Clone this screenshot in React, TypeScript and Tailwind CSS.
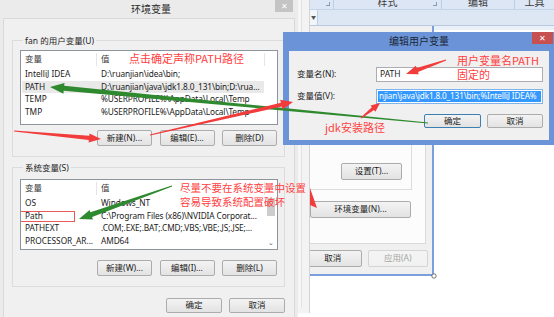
import React from "react";
import clsx from "clsx";

type Pt = [number, number];

// tapered annotation arrow: thin at the tail, wide head at the tip
function arrowPoints(tail: Pt, tip: Pt, w0: number, w1: number, hw: number, hl: number) {
  const dx = tip[0] - tail[0];
  const dy = tip[1] - tail[1];
  const len = Math.hypot(dx, dy);
  const ux = dx / len;
  const uy = dy / len;
  const nx = -uy;
  const ny = ux;
  const base: Pt = [tip[0] - ux * hl, tip[1] - uy * hl];
  const p = (c: Pt, off: number) => `${(c[0] + nx * off).toFixed(1)},${(c[1] + ny * off).toFixed(1)}`;
  return [
    p(tail, w0 / 2),
    p(base, w1 / 2),
    p(base, hw / 2),
    `${tip[0]},${tip[1]}`,
    p(base, -hw / 2),
    p(base, -w1 / 2),
    p(tail, -w0 / 2),
  ].join(" ");
}

const ui = "font-[Noto_Sans,Noto_Sans_CJK_SC,sans-serif]";
const cjk = "font-[Noto_Sans_CJK_SC,Noto_Sans,sans-serif]";

function Btn({
  children,
  className,
  primary = false,
  disabled = false,
}: {
  children: React.ReactNode;
  className?: string;
  primary?: boolean;
  disabled?: boolean;
}) {
  return (
    <div
      className={clsx(
        "flex items-center justify-center rounded-[2px] border bg-linear-to-b text-[8.5px] leading-none whitespace-nowrap",
        disabled
          ? "border-[#d4d4d4] from-[#f4f4f4] to-[#f1f1f1] text-[#a6a6a6]"
          : primary
            ? "border-[#3c7fb1] from-[#f3f3f3] to-[#e2e2e2] text-[#1a1a1a]"
            : "border-[#acacac] from-[#f3f3f3] to-[#e3e3e3] text-[#1a1a1a]",
        className,
      )}
    >
      {children}
    </div>
  );
}

type Row = [string, string];

function VarList({
  rows,
  selected,
  heightClass,
  scroll = false,
  boxed,
}: {
  rows: Row[];
  selected?: number;
  heightClass: string;
  scroll?: boolean;
  boxed?: number;
}) {
  return (
    <div className={clsx("flex w-full overflow-hidden border border-[#8e949c] bg-white", heightClass)}>
      <div className="flex w-[244px] flex-col">
        <div className="flex h-[17px] shrink-0 items-center text-[8.5px] text-[#3a3a3a]">
          <div className="w-[76px] border-r border-[#e5e5e5] pl-[4px]">变量</div>
          <div className="w-[168px] border-r border-[#e5e5e5] pl-[4px]">值</div>
        </div>
        {rows.map(([k, v], i) => (
          <div
            key={k}
            className={clsx(
              "relative ml-[1px] flex h-[12.5px] w-[242px] shrink-0 items-center text-[8.3px] text-[#1a1a1a]",
              i === selected && "bg-[#e9e9e9]",
            )}
          >
            <div className="w-[75px] overflow-hidden pl-[3px] whitespace-nowrap">{k}</div>
            <div className="w-[167px] overflow-hidden pl-[4px] whitespace-nowrap tracking-[-0.1px]">{v}</div>
            {i === boxed && (
              <div className="absolute top-[1px] left-[-2px] h-[11px] w-[55px] border border-[#e65a5a]" />
            )}
          </div>
        ))}
      </div>
      <div className="flex flex-1 flex-col">
        {scroll && (
          <>
            <div className="h-[18px]" />
            <div className="mx-[2px] h-[18px] bg-[#cdcdcd]" />
            <div className="flex-1" />
            <div className="flex h-[9px] items-center justify-center pb-[2px] text-[7px] text-[#606060]">⌄</div>
          </>
        )}
      </div>
    </div>
  );
}

function Legend({ children }: { children: React.ReactNode }) {
  return <legend className="ml-[3px] px-[2px] text-[8.5px] leading-[11px] text-[#1f1f1f]">{children}</legend>;
}

function EnvDialog() {
  return (
    <div className="absolute top-0 left-0 flex h-[317px] w-[298px] flex-col bg-[#ebebeb]">
      <div className="relative flex h-[18px] shrink-0 items-center justify-center pl-[4px] text-[10px] text-[#2b2b2b]">
        环境变量
        <div className="absolute top-0 right-[5px] flex h-[12px] w-[18px] items-center justify-center bg-[#c4c4c4] text-[8px] text-white">
          ✕
        </div>
      </div>
      <div className="mx-[3px] flex flex-1 flex-col border-x border-t border-[#d9d9d9] bg-[#f0f0f0] pl-[8px]">
        <fieldset className="mt-[16px] w-[273px] border border-[#dcdcdc] pr-[6px] pb-[10px] pl-[7px]">
          <Legend>fan 的用户变量(U)</Legend>
          <div className="mt-[4px]">
            <VarList
              heightClass="h-[75px]"
              selected={1}
              rows={[
                ["IntelliJ IDEA", "D:\\ruanjian\\idea\\bin;"],
                ["PATH", "D:\\ruanjian\\java\\jdk1.8.0_131\\bin;D:\\rua..."],
                ["TEMP", "%USERPROFILE%\\AppData\\Local\\Temp"],
                ["TMP", "%USERPROFILE%\\AppData\\Local\\Temp"],
              ]}
            />
          </div>
          <div className="mt-[5px] mr-[1px] flex justify-end gap-[7.5px]">
            <Btn className="h-[16px] w-[55px]">新建(N)...</Btn>
            <Btn className="h-[16px] w-[55px]">编辑(E)...</Btn>
            <Btn className="h-[16px] w-[55px]">删除(D)</Btn>
          </div>
        </fieldset>
        <fieldset className="mt-[5px] w-[273px] border border-[#dcdcdc] pr-[6px] pb-[10px] pl-[7px]">
          <Legend>系统变量(S)</Legend>
          <div className="mt-[6px]">
            <VarList
              heightClass="h-[71px]"
              scroll
              boxed={1}
              rows={[
                ["OS", "Windows_NT"],
                ["Path", "C:\\Program Files (x86)\\NVIDIA Corporat..."],
                ["PATHEXT", ".COM;.EXE;.BAT;.CMD;.VBS;.VBE;.JS;.JSE;..."],
                ["PROCESSOR_AR...", "AMD64"],
                ["PROCESSOR_ID...", "Intel64 Family 6 Model 60 Stepping 3, G..."],
              ]}
            />
          </div>
          <div className="mt-[10px] mr-[1px] flex justify-end gap-[7.5px]">
            <Btn className="h-[16px] w-[55px]">新建(W)...</Btn>
            <Btn className="h-[16px] w-[55px]">编辑(I)...</Btn>
            <Btn className="h-[16px] w-[55px]">删除(L)</Btn>
          </div>
        </fieldset>
        <div className="mt-[11px] flex justify-end gap-[7px] pr-[9px]">
          <Btn className="h-[15px] w-[56px]">确定</Btn>
          <Btn className="h-[15px] w-[56px]">取消</Btn>
        </div>
      </div>
    </div>
  );
}

function EditDialog() {
  return (
    <div className="absolute top-[32px] left-[283px] flex h-[113px] w-[272px] flex-col bg-[#6a94d7] px-[6px] pb-[5px]">
      <div className="flex h-[19px] shrink-0 items-center justify-center text-[10px] text-[#1c2636]">编辑用户变量</div>
      <div className="absolute top-0 right-[2px] flex h-[12px] w-[21px] items-center justify-center bg-[#c75050] text-[8px] text-white">
        ✕
      </div>
      <div className="flex flex-1 flex-col bg-[#f0f0f0] pr-[6px] pl-[8px] text-[8.5px] text-[#1a1a1a]">
        <div className="mt-[16px] flex items-center">
          <div className="w-[79px]">变量名(N):</div>
          <div className="flex h-[15px] w-[167px] items-center border border-[#abadb3] bg-white pl-[3px]">PATH</div>
        </div>
        <div className="mt-[7px] flex items-center">
          <div className="w-[79px]">变量值(V):</div>
          <div className="flex h-[15px] w-[167px] items-center border border-[#7eb4ea] bg-white p-[1px]">
            <div className="flex h-full w-full items-center overflow-hidden bg-[#3399ff] pl-[1px] text-[8.2px] whitespace-nowrap tracking-[-0.15px] text-white">
              njian\java\jdk1.8.0_131\bin;%IntelliJ IDEA%
            </div>
          </div>
        </div>
        <div className="mt-[10px] flex justify-end gap-[6px]">
          <Btn primary className="h-[14px] w-[57px]">
            确定
          </Btn>
          <Btn className="h-[14px] w-[56px]">取消</Btn>
        </div>
      </div>
    </div>
  );
}

function SysProps() {
  return (
    <div className="absolute top-[26px] left-[300px] flex h-[250px] w-[134px] flex-col border-r-2 border-b-2 border-[#7a9fdc] bg-[#f0f0f0] pr-[4px] pl-[4px]">
      <div className="mt-[14px] flex h-[204px] w-[122px] flex-col border border-[#dadada] bg-[#fcfcfc]">
        <div className="flex h-[149px] w-[107px] items-end justify-end border-r border-b border-[#dcdcdc] pr-[9px] pb-[9px]">
          <Btn className="h-[17px] w-[61px]">设置(T)...</Btn>
        </div>
        <Btn className="mt-[11px] ml-[5px] h-[17px] w-[101px]">环境变量(N)...</Btn>
      </div>
      <div className="mt-[6px] flex justify-end gap-[6px]">
        <Btn className="h-[17px] w-[60px]">取消</Btn>
        <Btn disabled className="h-[17px] w-[63px]">
          应用(A)
        </Btn>
      </div>
    </div>
  );
}

function Ribbon() {
  return (
    <div className="absolute top-0 left-[310px] flex h-[30px] w-[244px] flex-col bg-[#e3ebf6]">
      <div className="flex h-[10px] shrink-0 overflow-hidden border-b border-[#c3d3e8] bg-[#dce6f4] text-[10px] text-[#3b3b3b]">
        <div className="flex w-[24px] items-start justify-end border-r border-[#bccde4] pr-[3px]">
          <div className="mt-[2px] h-[4px] w-[4px] border-r border-b border-[#8a9ab0]" />
        </div>
        <div className="relative flex w-[108px] justify-center border-r border-[#bccde4]">
          <span className="-mt-[5px] leading-[14px]">样式</span>
          <div className="absolute top-[2px] right-[4px] h-[4px] w-[4px] border-r border-b border-[#8a9ab0]" />
        </div>
        <div className="flex w-[73px] justify-center border-r border-[#bccde4]">
          <span className="-mt-[5px] leading-[14px]">编辑</span>
        </div>
        <div className="flex flex-1 justify-center">
          <span className="-mt-[5px] leading-[14px]">工具</span>
        </div>
      </div>
      <div className="flex h-[16px] shrink-0 border-b border-[#b7c8df] bg-[#dde7f4]">
        <div className="flex w-[8px] items-center justify-center border-r border-[#bfcde0] bg-[#f2f6fb] text-[5px] text-[#555]">▼</div>
      </div>
      <div className="flex-1 bg-[#eaf0f8]" />
    </div>
  );
}

function Annotations() {
  const red = "#f23c3c";
  const green = "#2f8a2f";
  return (
    <>
      <svg className="pointer-events-none absolute top-0 left-0" width={554} height={317} viewBox="0 0 554 317">
        <polygon points={arrowPoints([428, 123], [50, 87], 1, 5, 11, 14)} fill={green} />
        <polygon points={arrowPoints([172, 186], [79, 219], 1, 5, 10, 13)} fill={green} />
        <polygon points={arrowPoints([14, 131], [101, 139], 0.8, 4.5, 9, 12)} fill={red} />
        <polygon points={arrowPoints([150, 135], [293, 102], 1, 4, 10, 12)} fill={red} />
        <polygon points={arrowPoints([361, 118], [380, 103], 1, 3.5, 8, 9)} fill={red} />
        <polygon points={arrowPoints([446, 60], [406, 74], 1, 4, 9, 12)} fill={red} />
        <polygon points="310,188 310,205 317,208" fill={red} />
        <circle cx={434} cy={276} r={2.2} fill="white" stroke="#555" strokeWidth={0.8} />
      </svg>
      <div className={clsx(cjk, "pointer-events-none absolute top-[52px] left-[129px] text-[11px] leading-[13px] text-[#ff4040]")}>
        点击确定声称PATH路径
      </div>
      <div className={clsx(cjk, "pointer-events-none absolute top-[53px] left-[457px] text-[11px] leading-[14px] text-[#ff4040]")}>
        用户变量名PATH
        <br />
        固定的
      </div>
      <div className={clsx(cjk, "pointer-events-none absolute top-[121px] left-[325px] text-[11px] leading-[13px] text-[#ff4040]")}>
        jdk安装路径
      </div>
      <div className={clsx(cjk, "pointer-events-none absolute top-[181px] left-[180px] text-[10.5px] leading-[14px] text-[#ff4040]")}>
        尽量不要在系统变量中设置
        <br />
        容易导致系统配置破坏
      </div>
    </>
  );
}

export default function App() {
  return (
    <div className={clsx(ui, "relative h-[317px] w-[554px] overflow-hidden bg-white")}>
      <Ribbon />
      <SysProps />
      <div className="absolute top-0 left-0 h-[313px] w-[310px] border-r border-[#d3d3d3] bg-[#f3f3f3]">
        <div className="h-[308px] w-[302px] border-r border-[#e1e1e1] bg-[#f6f6f6]" />
      </div>
      <EnvDialog />
      <EditDialog />
      <Annotations />
    </div>
  );
}
